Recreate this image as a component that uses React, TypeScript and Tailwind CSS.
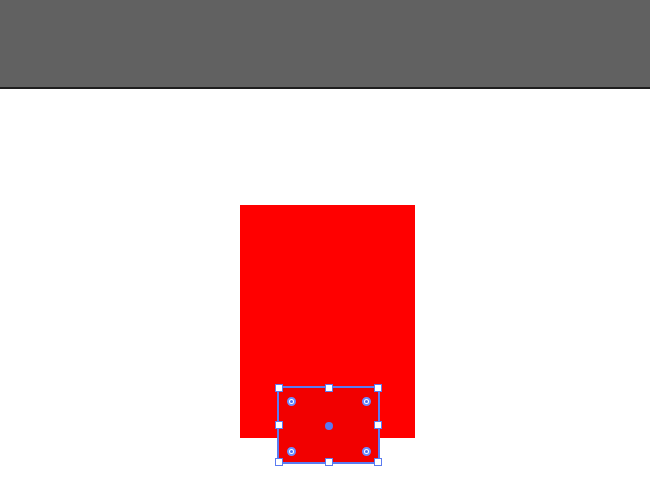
import React from 'react';

const handles = [
  [0, 0], [0.5, 0], [1, 0],
  [0, 0.5], [1, 0.5],
  [0, 1], [0.5, 1], [1, 1],
];

function Handle({ x, y }: { x: number; y: number }) {
  return (
    <div
      className="absolute w-[8px] h-[8px] -ml-[4px] -mt-[4px] bg-white border border-[#5b7bf0]"
      style={{ left: `${x * 100}%`, top: `${y * 100}%` }}
    />
  );
}

function Ring({ left, top }: { left: number; top: number }) {
  return (
    <div
      className="absolute w-[9px] h-[9px] -ml-[4.5px] -mt-[4.5px] rounded-full bg-white border-2 border-[#6b8cff] flex items-center justify-center"
      style={{ left, top }}
    >
      <div className="w-[3px] h-[3px] rounded-full bg-[#4a6ef0]" />
    </div>
  );
}

export default function App() {
  return (
    <div className="w-[650px] h-[489px] bg-white overflow-hidden flex flex-col">
      <div className="h-[87px] bg-[#616161]" />
      <div className="h-[2px] bg-[#1e1e1e]" />
      <div className="relative flex-1">
        {/* canvas */}
        <div className="absolute left-[240px] top-[116px] w-[175px] h-[233px] bg-[#ff0000]" />
        <div className="absolute left-[277px] top-[297px] w-[103px] h-[78px] bg-[#f20000] border-2 border-[#5a7cf2]">
          {handles.map(([x, y], i) => (
            <Handle key={i} x={x} y={y} />
          ))}
          <Ring left={12} top={13} />
          <Ring left={87} top={13} />
          <Ring left={12} top={63} />
          <Ring left={87} top={63} />
          <div className="absolute left-[50px] top-[38px] w-[8px] h-[8px] -ml-[4px] -mt-[4px] rounded-full bg-[#5a78f0]" />
        </div>
      </div>
    </div>
  );
}
